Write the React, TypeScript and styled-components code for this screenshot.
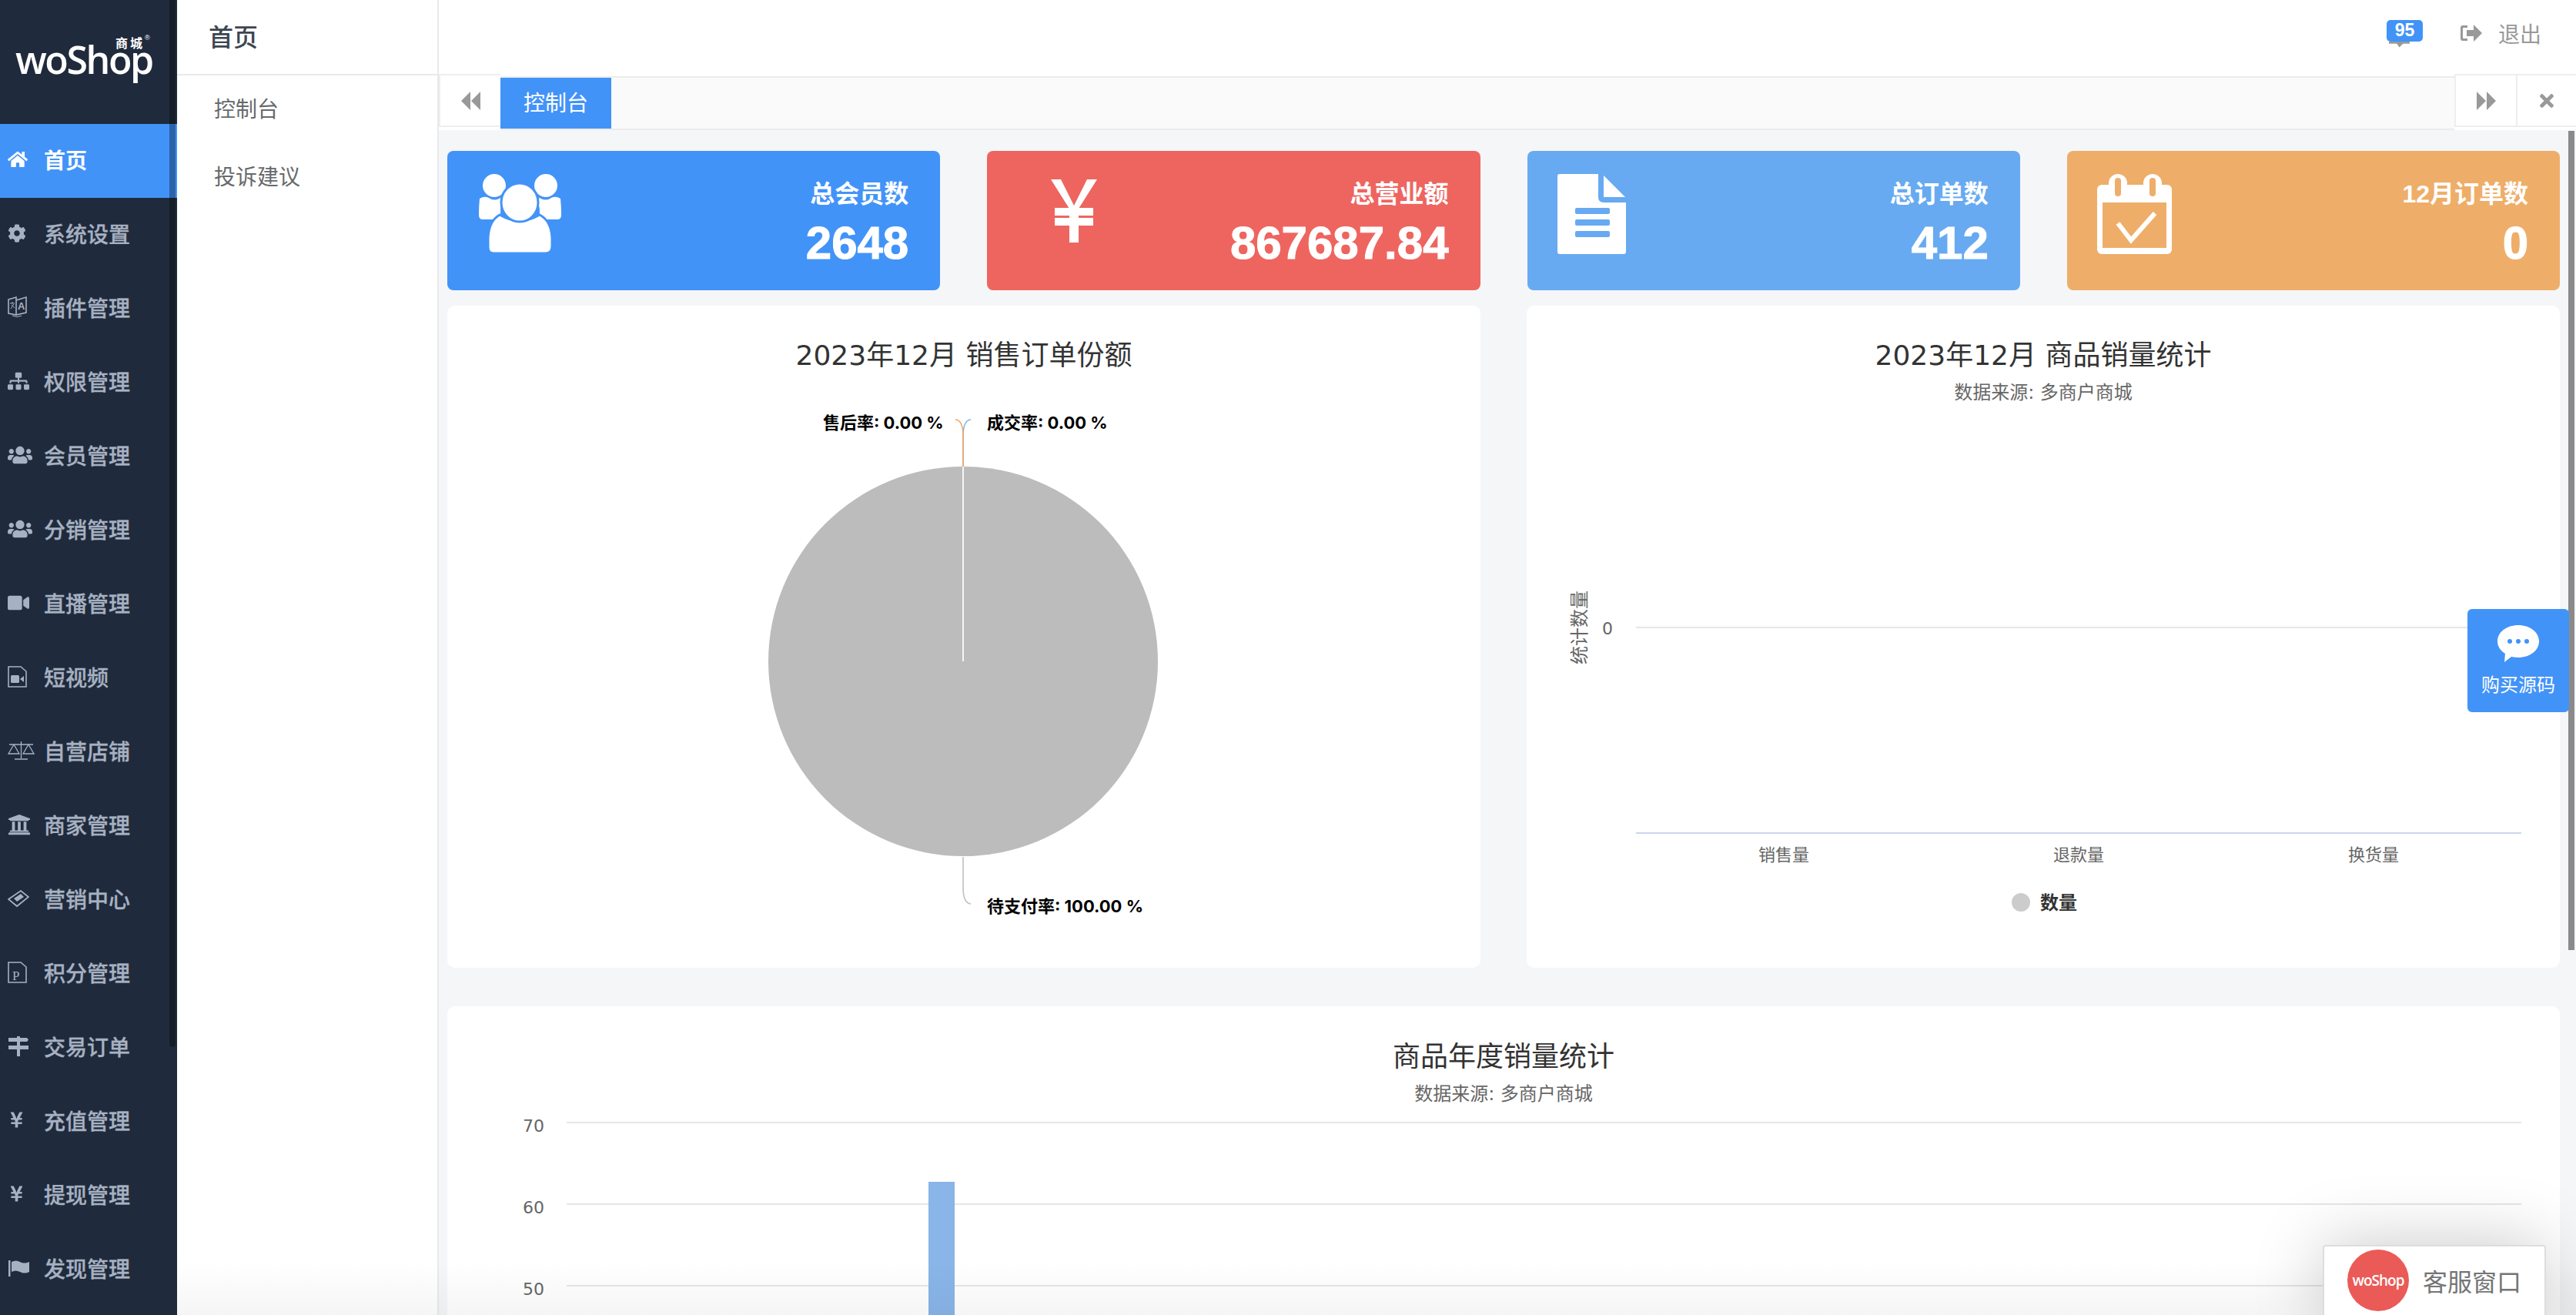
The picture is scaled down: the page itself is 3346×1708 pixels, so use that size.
import React from "react";
import styled, { createGlobalStyle } from "styled-components";
import { FaHome, FaCog, FaSitemap, FaUsers, FaVideo, FaUniversity, FaYenSign, FaTimes } from "react-icons/fa";

const sans = `"Liberation Sans", "Noto Sans CJK SC", sans-serif`;
const chartFont = `"DejaVu Sans", "Noto Sans CJK SC", sans-serif`;

const GlobalStyle = createGlobalStyle`
  html, body { margin: 0; padding: 0; height: 100%; overflow: hidden; }
  body { font-family: ${sans}; background: #fff; }
  #root { height: 100%; }
`;

const Page = styled.div`
  display: flex;
  position: relative;
  height: 100vh;
  overflow: hidden;
`;

const Sidebar = styled.aside`
  position: relative;
  width: 230px;
  flex: none;
  background: #1f2b3c;
`;

const SideThumb = styled.div`
  position: absolute;
  left: 220px;
  top: 0;
  width: 8px;
  height: 1360px;
  background: rgba(0, 0, 0, 0.32);
  border-radius: 0 0 4px 4px;
`;

const LogoBox = styled.div`
  position: relative;
  height: 161px;
  color: #fff;
`;

const LogoWord = styled.div`
  position: absolute;
  left: 20px;
  top: 65px;
  font-family: "Open Sans", sans-serif;
  font-weight: 600;
  font-size: 50px;
  line-height: 24px;
  letter-spacing: -2.4px;
`;

const LogoTag = styled.div`
  position: absolute;
  left: 150px;
  top: 49px;
  font-size: 16px;
  font-weight: 700;
  letter-spacing: 3px;
  line-height: 16px;
`;

const LogoMark = styled.span`
  position: absolute;
  left: 38px;
  top: -5px;
  font-size: 9px;
  font-weight: 400;
  letter-spacing: 0;
  line-height: 10px;
`;

const NavItem = styled.div<{ $active?: boolean }>`
  display: flex;
  align-items: center;
  box-sizing: border-box;
  height: 96px;
  padding: 0 0 5px 10px;
  font-size: 28px;
  font-weight: ${(p) => (p.$active ? 700 : 500)};
  -webkit-text-stroke: ${(p) => (p.$active ? 0 : "0.3px")};
  color: ${(p) => (p.$active ? "#fff" : "#a7b1c2")};
  background: ${(p) => (p.$active ? "#4293f8" : "transparent")};
`;

const NavIcon = styled.span`
  display: flex;
  align-items: center;
  width: 47px;
  flex: none;
`;

const SubNav = styled.nav`
  width: 338px;
  flex: none;
  background: #fff;
  border-right: 2px solid #e7eaec;
`;

const SubHead = styled.div`
  display: flex;
  align-items: center;
  height: 92px;
  padding: 0 0 4px 41px;
  font-size: 32px;
  font-weight: 500;
  color: #3d4651;
  border-bottom: 2px solid #e7eaec;
`;

const SubLink = styled.div`
  display: flex;
  align-items: center;
  box-sizing: border-box;
  height: 88px;
  padding: 0 0 4px 48px;
  font-size: 28px;
  color: #676a6c;
`;

const Main = styled.main`
  position: relative;
  flex: 1;
  min-width: 0;
  display: flex;
  flex-direction: column;
  background: #f5f6f8;
`;

const TopBar = styled.header`
  display: flex;
  align-items: center;
  justify-content: flex-end;
  height: 96px;
  padding-right: 45px;
  background: #fff;
  flex: none;
`;

const BadgeWrap = styled.div`
  position: relative;
  width: 47px;
  height: 36px;
  margin: -9px 48px 0 0;
`;

const Badge = styled.span`
  position: absolute;
  inset: 0 0 8px 0;
  display: flex;
  align-items: center;
  justify-content: center;
  border-radius: 5px;
  background: #4293f8;
  color: #fff;
  font-size: 23px;
  font-weight: 700;
`;

const BadgeTail = styled.span`
  position: absolute;
  left: 3px;
  bottom: 0;
  width: 27px;
  height: 8px;
  background: #999;
  clip-path: polygon(0 0, 100% 0, 100% 40%, 68% 40%, 50% 100%, 38% 40%, 0 40%);
`;

const ExitLink = styled.div`
  display: flex;
  align-items: center;
  gap: 20px;
  margin-bottom: 10px;
  color: #999;
  font-size: 28px;
`;

const TabBar = styled.div`
  display: flex;
  height: 73px;
  flex: none;
  background: #fff;
`;

const TabTrack = styled.div`
  flex: 1;
  display: flex;
  margin-top: 3px;
  background: #fafafa;
  border-top: 2px solid #ececec;
  border-bottom: 2px solid #ececec;
`;

const ActiveTab = styled.div`
  display: flex;
  align-items: center;
  padding: 0 30px 4px 30px;
  background: #4293f8;
  color: #fff;
  font-size: 28px;
`;

const TabButton = styled.div<{ $width: number }>`
  display: flex;
  align-items: center;
  justify-content: center;
  box-sizing: border-box;
  width: ${(p) => p.$width}px;
  height: 69px;
  flex: none;
  background: #fff;
  color: #999;
  border-top: 2px solid #eee;
  border-bottom: 2px solid #eee;
  border-left: 2px solid #eee;
`;

const Content = styled.div`
  flex: 1;
  min-height: 0;
  overflow: hidden;
  padding: 27px 21px 0 11px;
  display: flex;
  flex-direction: column;
`;

const StatRow = styled.section`
  display: grid;
  grid-template-columns: repeat(4, 1fr);
  column-gap: 61px;
  flex: none;
`;

const StatCard = styled.div<{ $bg: string }>`
  display: flex;
  justify-content: space-between;
  align-items: flex-start;
  box-sizing: border-box;
  height: 181px;
  padding: 30px 41px 0 39px;
  border-radius: 8px;
  color: #fff;
  background: ${(p) => p.$bg};
`;

const StatText = styled.div`
  text-align: right;
`;

const StatLabel = styled.div`
  margin-top: 8px;
  font-size: 32px;
  line-height: 36px;
  font-weight: 700;
`;

const StatValue = styled.div`
  margin-top: 16px;
  font-size: 60px;
  line-height: 60px;
  font-weight: 700;
  -webkit-text-stroke: 1px #fff;
`;

const ChartRow = styled.section`
  display: grid;
  grid-template-columns: 1fr 1fr;
  column-gap: 60px;
  margin-top: 20px;
  flex: none;
`;

const ChartCard = styled.div`
  height: 860px;
  background: #fff;
  border-radius: 10px;
  overflow: hidden;
`;

const WideCard = styled.div`
  height: 900px;
  margin-top: 50px;
  flex: none;
  background: #fff;
  border-radius: 10px;
  overflow: hidden;
`;

const ChartSvg = styled.svg`
  display: block;
  font-family: ${chartFont};
`;

const MainThumb = styled.div`
  position: absolute;
  right: 2px;
  top: 170px;
  width: 8px;
  height: 1064px;
  background: #8a8a8a;
`;

const BuyButton = styled.div`
  position: absolute;
  right: 9px;
  top: 791px;
  box-sizing: border-box;
  width: 132px;
  height: 134px;
  padding-top: 20px;
  display: flex;
  flex-direction: column;
  align-items: center;
  gap: 9px;
  border-radius: 6px;
  background: #4293f8;
  color: #fff;
  font-size: 24px;
`;

const BottomFade = styled.div`
  position: absolute;
  left: 230px;
  right: 0;
  bottom: 0;
  height: 70px;
  background: linear-gradient(to bottom, rgba(0, 0, 0, 0), rgba(0, 0, 0, 0.04));
  pointer-events: none;
`;

const ServiceBox = styled.div`
  position: absolute;
  right: 39px;
  bottom: -12px;
  box-sizing: border-box;
  width: 290px;
  height: 103px;
  display: flex;
  align-items: center;
  gap: 18px;
  padding: 0 0 12px 30px;
  background: #fff;
  border: 2px solid #ddd;
  border-radius: 4px;
  box-shadow: 0 0 90px rgba(0, 0, 0, 0.22);
  color: #757575;
  font-size: 32px;
`;

const ServiceAvatar = styled.div`
  display: flex;
  align-items: center;
  justify-content: center;
  width: 80px;
  height: 80px;
  flex: none;
  border-radius: 50%;
  background: #ea5b57;
  color: #fff;
  font-family: "Open Sans", sans-serif;
  font-size: 19px;
  font-weight: 600;
  letter-spacing: -1px;
`;

const iconLine = { fill: "none", stroke: "currentColor", strokeWidth: 1.6 };

const BookIcon = () => (
  <svg width="25" height="29" viewBox="0 0 25 29">
    <path d="M1 5l10 -3v23l-10 -2zM11 6l13 -4v20l-13 3" {...iconLine} />
    <path d="M3 10h6M6 8v2M4 17l4 -6M5 12l4 4" {...iconLine} strokeWidth={1} />
    <text x="13" y="18" fontSize="13" fontWeight="700" fill="currentColor">A</text>
    <path d="M6 26q6 3 12 0" {...iconLine} strokeWidth={1} />
  </svg>
);

const VideoFileIcon = () => (
  <svg width="25" height="28" viewBox="0 0 25 28">
    <path d="M1 1h16l7 6v20h-23z" {...iconLine} />
    <rect x="4" y="12" width="11" height="10" rx="1.500" fill="currentColor" />
    <path d="M16 17l5 -4v8z" fill="currentColor" />
  </svg>
);

const ScaleIcon = () => (
  <svg width="35" height="27" viewBox="0 0 35 27">
    <path d="M2 6h31M17.500 2v22M9 25h17" {...iconLine} strokeWidth={1.3} />
    <path d="M8 6l-7 12h14zM27 6l-7 12h14z" {...iconLine} strokeWidth={1.3} />
  </svg>
);

const TicketIcon = () => (
  <svg width="28" height="26" viewBox="0 0 28 26">
    <path d="M1 14l16 -11 10 8 -15 12z" {...iconLine} strokeWidth={1.8} />
    <path d="M8 13l9 -6 4 4 -9 6z" fill="currentColor" />
  </svg>
);

const PointFileIcon = () => (
  <svg width="25" height="28" viewBox="0 0 25 28">
    <path d="M1 1h16l7 6v20h-23z" {...iconLine} />
    <text x="6" y="24" fontFamily="Liberation Serif, serif" fontSize="17" fontWeight="400" fill="currentColor">P</text>
  </svg>
);

const RoadIcon = () => (
  <svg width="28" height="26" viewBox="0 0 28 26">
    <path d="M1 2h24l2 2.500 -2 2.500h-24zM1 12h26v5h-26zM12 0h4v26h-4z" fill="currentColor" />
  </svg>
);

const FlagIcon = () => (
  <svg width="29" height="23" viewBox="0 0 29 23">
    <path d="M1 2h2.500v21h-2.500z" fill="currentColor" />
    <path d="M5 4q6 -3 11 0t12 0v13q-6 3 -12 0t-11 0z" fill="currentColor" />
  </svg>
);

const SkipIcon = ({ flip }: { flip?: boolean }) => (
  <svg width="25" height="24" viewBox="0 0 25 24" fill="currentColor">
    <g transform={flip ? "translate(25 0) scale(-1 1)" : undefined}>
      <path d="M12 0v24l-12 -12zM25 0v24l-12 -12z" />
    </g>
  </svg>
);

const navItems: { label: string; icon: React.ReactNode; active?: boolean }[] = [
  { label: "首页", icon: <FaHome size={26} />, active: true },
  { label: "系统设置", icon: <FaCog size={24} /> },
  { label: "插件管理", icon: <BookIcon /> },
  { label: "权限管理", icon: <FaSitemap size={28} /> },
  { label: "会员管理", icon: <FaUsers size={32} /> },
  { label: "分销管理", icon: <FaUsers size={32} /> },
  { label: "直播管理", icon: <FaVideo size={28} /> },
  { label: "短视频", icon: <VideoFileIcon /> },
  { label: "自营店铺", icon: <ScaleIcon /> },
  { label: "商家管理", icon: <FaUniversity size={30} /> },
  { label: "营销中心", icon: <TicketIcon /> },
  { label: "积分管理", icon: <PointFileIcon /> },
  { label: "交易订单", icon: <RoadIcon /> },
  { label: "充值管理", icon: <FaYenSign size={23} /> },
  { label: "提现管理", icon: <FaYenSign size={23} /> },
  { label: "发现管理", icon: <FlagIcon /> },
];

const UsersGlyph = ({ bg }: { bg: string }) => (
  <svg width="111" height="103" viewBox="0 0 111 103" fill="#fff">
    <path d="M3 32q6 -4 12 -1 7 5 15 0l4 2q-6 10 -3 26h-24q-5 0 -5 -6 0 -12 1 -21z" />
    <path d="M108 32q-6 -4 -12 -1 -7 5 -15 0l-4 2q6 10 3 26h24q5 0 5 -6 0 -12 -1 -21z" />
    <ellipse cx="22" cy="15" rx="15" ry="15" />
    <ellipse cx="89" cy="15" rx="15" ry="15" />
    <path d="M29 53q14 8 26 8t26 -8q15 8 16 30 0 10 0 12 -1 8 -8 8h-68q-7 0 -7 -8 0 -2 0 -12 1 -22 15 -30z" stroke={bg} strokeWidth="3" />
    <ellipse cx="55" cy="37" rx="24" ry="25" stroke={bg} strokeWidth="3" />
  </svg>
);

const YenGlyph = () => (
  <svg width="60" height="82" viewBox="0 0 60 82" fill="#fff">
    <path d="M0 0h13l17 34 17 -34h13l-24 38h-12z" />
    <path d="M24 35h12v47h-12z" />
    <path d="M5 37h50v10h-50zM5 50h50v10h-50z" />
  </svg>
);

const DocGlyph = ({ bg }: { bg: string }) => (
  <svg width="89" height="104" viewBox="0 0 89 104" fill="#fff">
    <path d="M3 0h50v30q0 7 7 7h29v64q0 3 -3 3h-83q-3 0 -3 -3v-98q0 -3 3 -3z" />
    <path d="M60 2l28 28h-28z" />
    <rect x="23" y="44" width="45" height="8" rx="2" fill={bg} />
    <rect x="23" y="59" width="45" height="8" rx="2" fill={bg} />
    <rect x="23" y="74" width="45" height="8" rx="2" fill={bg} />
  </svg>
);

const CalendarGlyph = ({ bg }: { bg: string }) => (
  <svg width="97" height="104" viewBox="0 0 97 104" fill="#fff">
    <rect x="0" y="14" width="97" height="90" rx="6" />
    <rect x="7" y="37" width="83" height="59" fill={bg} />
    <rect x="15" y="0" width="24" height="30" rx="12" />
    <rect x="60" y="0" width="24" height="30" rx="12" />
    <rect x="23" y="5" width="8" height="24" rx="4" fill={bg} />
    <rect x="68" y="5" width="8" height="24" rx="4" fill={bg} />
    <path d="M27 64l17 22 31 -35" fill="none" stroke="#fff" strokeWidth="6" />
  </svg>
);

const YenBox = styled.div`
  padding: 7px 0 0 44px;
`;

const stats = [
  { label: "总会员数", value: "2648", bg: "#4293f8", glyph: <UsersGlyph bg="#4293f8" /> },
  { label: "总营业额", value: "867687.84", bg: "#ee6560", glyph: <YenBox><YenGlyph /></YenBox> },
  { label: "总订单数", value: "412", bg: "#67aaf1", glyph: <DocGlyph bg="#67aaf1" /> },
  { label: "12月订单数", value: "0", bg: "#eeae69", glyph: <CalendarGlyph bg="#eeae69" /> },
];

const ChartTitle = ({ x, y, children }: { x: number; y: number; children: React.ReactNode }) => (
  <text x={x} y={y} textAnchor="middle" fontSize="36" fill="#333">
    {children}
  </text>
);

const ChartSub = ({ x, y, children }: { x: number; y: number; children: React.ReactNode }) => (
  <text x={x} y={y} textAnchor="middle" fontSize="24" fill="#666">
    {children}
  </text>
);

const PieChart = () => (
  <ChartSvg width="1342" height="860" viewBox="0 0 1342 860">
    <ChartTitle x={671} y={77}>2023年12月 销售订单份额</ChartTitle>
    <circle cx="670" cy="462" r="253" fill="#bcbcbc" />
    <path d="M670 209v253" stroke="#f5f5f5" strokeWidth="2" />
    <path d="M670 209v-40q0 -20 10 -21" fill="none" stroke="#7cb5ec" strokeWidth="1.500" />
    <path d="M670 209v-40q0 -20 -10 -21" fill="none" stroke="#f7a35c" strokeWidth="1.500" />
    <path d="M670 716v40q0 20 10 21" fill="none" stroke="#bcbcbc" strokeWidth="1.500" />
    <g fontFamily={`Inter, "Noto Sans CJK SC", sans-serif`} fontSize="22" fontWeight="700" fill="#000">
      <text x="488" y="160">售后率: 0.00 %</text>
      <text x="701" y="160">成交率: 0.00 %</text>
      <text x="701" y="788">待支付率: 100.00 %</text>
    </g>
  </ChartSvg>
);

const SalesChart = () => (
  <ChartSvg width="1342" height="860" viewBox="0 0 1342 860">
    <ChartTitle x={671} y={77}>2023年12月 商品销量统计</ChartTitle>
    <ChartSub x={671} y={121}>数据来源: 多商户商城</ChartSub>
    <text transform="translate(77 418) rotate(-90)" textAnchor="middle" fontSize="24" fill="#666">统计数量</text>
    <text x="105" y="427" textAnchor="middle" fontSize="22" fill="#666">0</text>
    <path d="M142 418h1150" stroke="#e6e6e6" strokeWidth="2" />
    <path d="M142 685h1150" stroke="#ccd6eb" strokeWidth="2" />
    <g fontSize="22" fill="#666" textAnchor="middle">
      <text x="334" y="721">销售量</text>
      <text x="717" y="721">退款量</text>
      <text x="1100" y="721">换货量</text>
    </g>
    <circle cx="642" cy="775" r="12" fill="#ccc" />
    <text x="667" y="784" fontSize="24" fontWeight="700" fill="#333">数量</text>
  </ChartSvg>
);

const YearChart = () => (
  <ChartSvg width="2744" height="900" viewBox="0 0 2744 900">
    <ChartTitle x={1372} y={78}>商品年度销量统计</ChartTitle>
    <ChartSub x={1372} y={122}>数据来源: 多商户商城</ChartSub>
    <g stroke="#e6e6e6" strokeWidth="2">
      <path d="M155 151h2539M155 257h2539M155 363h2539M155 469h2539" />
    </g>
    <g fontSize="22" fill="#666" textAnchor="end">
      <text x="126" y="163">70</text>
      <text x="126" y="269">60</text>
      <text x="126" y="375">50</text>
    </g>
    <rect x="625" y="228" width="34" height="672" fill="#89b5e8" />
  </ChartSvg>
);

const App = () => (
  <Page>
    <GlobalStyle />
    <Sidebar>
      <LogoBox>
        <LogoTag>
          商城
          <LogoMark>®</LogoMark>
        </LogoTag>
        <LogoWord>woShop</LogoWord>
      </LogoBox>
      {navItems.map((item) => (
        <NavItem key={item.label} $active={item.active}>
          <NavIcon>{item.icon}</NavIcon>
          {item.label}
        </NavItem>
      ))}
      <SideThumb />
    </Sidebar>
    <SubNav>
      <SubHead>首页</SubHead>
      <SubLink>控制台</SubLink>
      <SubLink>投诉建议</SubLink>
    </SubNav>
    <Main>
      <TopBar>
        <BadgeWrap>
          <Badge>95</Badge>
          <BadgeTail />
        </BadgeWrap>
        <ExitLink>
          <svg width="30" height="24" viewBox="0 0 30 24" fill="currentColor">
            <path d="M10 2h-6q-3 0 -3 3v14q0 3 3 3h6v-3h-5q-1 0 -1 -1v-12q0 -1 1 -1h5z" />
            <path d="M9 8h9v-7l11 11 -11 11v-7h-9z" />
          </svg>
          退出
        </ExitLink>
      </TopBar>
      <TabBar>
        <TabButton $width={80}>
          <SkipIcon />
        </TabButton>
        <TabTrack>
          <ActiveTab>控制台</ActiveTab>
        </TabTrack>
        <TabButton $width={80}>
          <SkipIcon flip />
        </TabButton>
        <TabButton $width={78}>
          <FaTimes size={26} />
        </TabButton>
      </TabBar>
      <Content>
        <StatRow>
          {stats.map((s) => (
            <StatCard key={s.label} $bg={s.bg}>
              {s.glyph}
              <StatText>
                <StatLabel>{s.label}</StatLabel>
                <StatValue>{s.value}</StatValue>
              </StatText>
            </StatCard>
          ))}
        </StatRow>
        <ChartRow>
          <ChartCard>
            <PieChart />
          </ChartCard>
          <ChartCard>
            <SalesChart />
          </ChartCard>
        </ChartRow>
        <WideCard>
          <YearChart />
        </WideCard>
      </Content>
      <MainThumb />
      <BuyButton>
        <svg width="56" height="50" viewBox="0 0 56 50">
          <path d="M28 1c15 0 27 9 27 21s-12 21 -27 21q-4 0 -9 -1l-9 7 1 -11c-6 -4 -10 -9 -10 -16c0 -12 12 -21 27 -21z" fill="#fff" />
          <circle cx="17" cy="22" r="3" fill="#4293f8" />
          <circle cx="28" cy="22" r="3" fill="#4293f8" />
          <circle cx="39" cy="22" r="3" fill="#4293f8" />
        </svg>
        购买源码
      </BuyButton>
    </Main>
    <BottomFade />
    <ServiceBox>
      <ServiceAvatar>woShop</ServiceAvatar>
      客服窗口
    </ServiceBox>
  </Page>
);

export default App;
